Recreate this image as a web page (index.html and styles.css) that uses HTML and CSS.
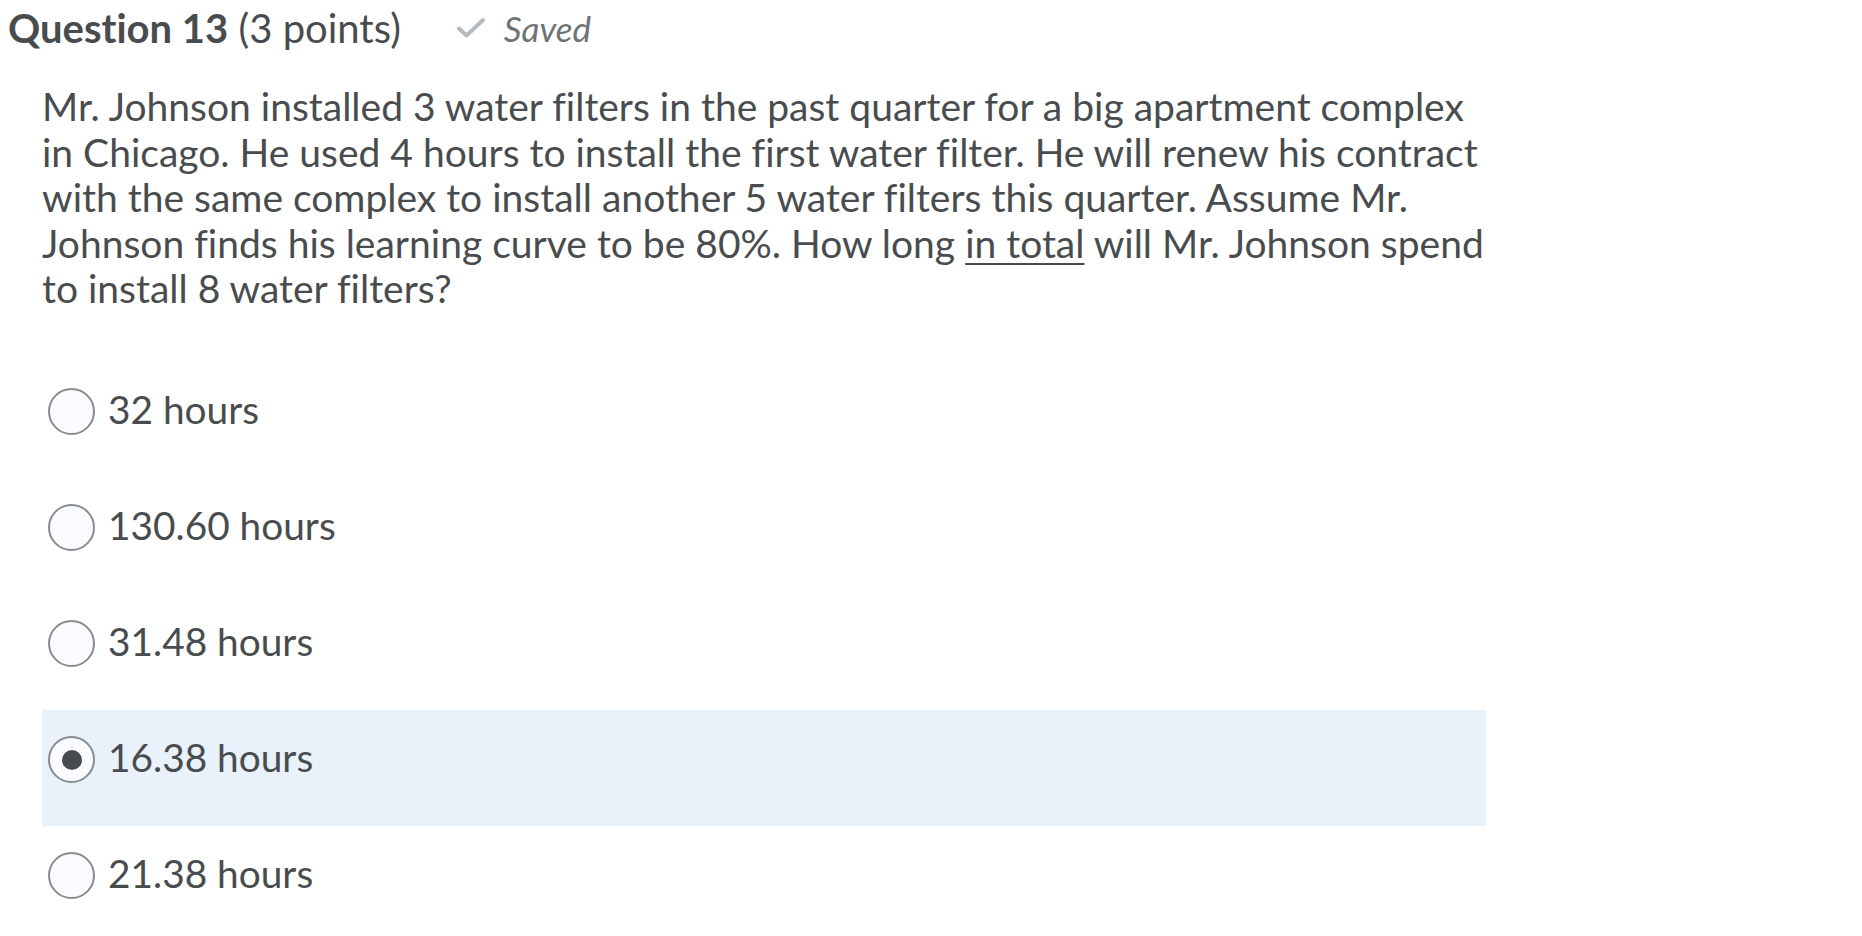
FILE: index.html
```html
<!DOCTYPE html>
<html lang="en">
<head>
<meta charset="utf-8">
<title>Question 13</title>
<link rel="stylesheet" href="styles.css">
</head>
<body>
<div class="question">
  <div class="q-header">
    <h2 class="q-title"><strong>Question 13</strong> (3 points)</h2>
    <span class="q-saved">
      <svg class="check" viewBox="0 0 30 21" width="30" height="21" aria-hidden="true">
        <path d="M3 11.5 L10.5 18.5 L27 3" fill="none" stroke="#b4bbbf" stroke-width="4" stroke-linecap="round" stroke-linejoin="round"/>
      </svg>
      <em>Saved</em>
    </span>
  </div>

  <div class="q-body">
    <p class="q-text">Mr. Johnson installed 3 water filters in the past quarter for a big apartment complex in Chicago. He used 4 hours to install the first water filter. He will renew his contract with the same complex to install another 5 water filters this quarter. Assume Mr. Johnson finds his learning curve to be 80%. How long <u>in total</u> will Mr. Johnson spend to install 8 water filters?</p>

    <div class="choices">
      <label class="choice"><span class="radio"></span><span class="choice-text">32 hours</span></label>
      <label class="choice"><span class="radio"></span><span class="choice-text">130.60 hours</span></label>
      <label class="choice"><span class="radio"></span><span class="choice-text">31.48 hours</span></label>
      <label class="choice selected"><span class="radio checked"></span><span class="choice-text">16.38 hours</span></label>
      <label class="choice"><span class="radio"></span><span class="choice-text">21.38 hours</span></label>
    </div>
  </div>
</div>
</body>
</html>
```
FILE: styles.css
```css
html, body {
  background: #ffffff;
}
body {
  margin: 8px;
  font-family: Lato, "Open Sans", sans-serif;
  color: #494c4e;
  font-variant-ligatures: none;
}
.q-header {
  display: flex;
  align-items: center;
  gap: 55px;
}
.q-title {
  margin: 0;
  font-size: 40px;
  font-weight: 400;
  line-height: 40px;
}
.q-title strong {
  font-weight: 700;
}
.q-saved {
  display: flex;
  align-items: center;
  gap: 18px;
  color: #6e7376;
  font-size: 35px;
  line-height: 40px;
}
.q-saved em {
  font-style: italic;
}
.check {
  position: relative;
  top: -1px;
}
.q-body {
  margin-left: 34px;
  width: 1444px;
}
.q-text {
  margin: 36px 0 0 0;
  padding: 0;
  font-size: 39px;
  line-height: 45.6px;
}
.q-text u {
  text-decoration-thickness: 2px;
  text-underline-offset: 5px;
}
.choices {
  margin-top: 50px;
  display: flex;
  flex-direction: column;
}
.choice {
  display: flex;
  align-items: center;
  gap: 13px;
  height: 116px;
  box-sizing: border-box;
  padding: 0 0 16px 6px;
}
.choice.selected {
  background: #e9f1fb;
}
.radio {
  width: 47px;
  height: 47px;
  box-sizing: border-box;
  border: 2px solid #878c90;
  border-radius: 50%;
  background: #f9fbff;
  display: flex;
  align-items: center;
  justify-content: center;
  flex: none;
}
.radio.checked::after {
  content: "";
  width: 20px;
  height: 20px;
  border-radius: 50%;
  background: #494c4e;
}
.choice-text {
  font-size: 38.8px;
  padding-bottom: 5px;
}
```
